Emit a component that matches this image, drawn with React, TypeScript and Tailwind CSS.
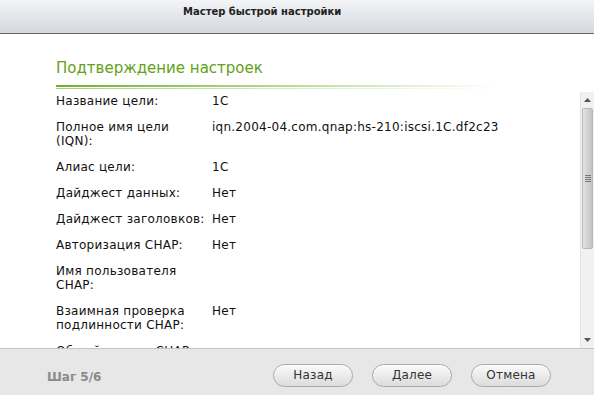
import React from "react";

const rows: { label: string[]; value: string }[] = [
  { label: ["Название цели:"], value: "1C" },
  { label: ["Полное имя цели", "(IQN):"], value: "iqn.2004-04.com.qnap:hs-210:iscsi.1C.df2c23" },
  { label: ["Алиас цели:"], value: "1C" },
  { label: ["Дайджест данных:"], value: "Нет" },
  { label: ["Дайджест заголовков:"], value: "Нет" },
  { label: ["Авторизация CHAP:"], value: "Нет" },
  { label: ["Имя пользователя", "CHAP:"], value: "" },
  { label: ["Взаимная проверка", "подлинности CHAP:"], value: "Нет" },
  { label: ["Общий пароль CHAP:"], value: "" },
];

function Scrollbar() {
  return (
    <div className="w-[14px] shrink-0 flex flex-col bg-[#f1f1f1] border-l border-[#e2e2e2]">
      <div className="h-[16px] flex items-center justify-center">
        <svg width="7" height="4" viewBox="0 0 7 4">
          <path d="M0 4 L3.5 0 L7 4 Z" fill="#555" />
        </svg>
      </div>
      <div className="h-[141px] mx-[1px] rounded-[2px] border border-[#b8b8b8] bg-gradient-to-r from-[#e4e4e4] via-[#d2d2d2] to-[#c4c4c4] flex items-center justify-center">
        <div className="flex flex-col gap-[1px]">
          <div className="w-[6px] h-[1px] bg-[#777]" />
          <div className="w-[6px] h-[1px] bg-[#777]" />
          <div className="w-[6px] h-[1px] bg-[#777]" />
          <div className="w-[6px] h-[1px] bg-[#777]" />
        </div>
      </div>
      <div className="flex-1" />
      <div className="h-[16px] flex items-center justify-center">
        <svg width="7" height="4" viewBox="0 0 7 4">
          <path d="M0 0 L3.5 4 L7 0 Z" fill="#555" />
        </svg>
      </div>
    </div>
  );
}

function Btn({ children }: { children: React.ReactNode }) {
  return (
    <button className="w-[80px] h-[23px] rounded-full border border-[#a9a9a9] bg-gradient-to-b from-[#fafafa] to-[#dcdcdc] text-[12px] tracking-[0.2px] text-[#333] shadow-[inset_0_1px_0_#fff]">
      {children}
    </button>
  );
}

export default function App() {
  return (
    <div
      className="w-[594px] h-[395px] flex flex-col bg-white overflow-hidden"
      style={{ fontFamily: '"DejaVu Sans", Verdana, sans-serif' }}
    >
      <div className="h-[34px] shrink-0 flex items-center pl-[183px] bg-gradient-to-b from-[#f3f4f6] to-[#d4d9df] border-b border-[#666]">
        <span className="text-[10px] font-bold text-[#222] -mt-[11px]">Мастер быстрой настройки</span>
      </div>
      <div className="pl-[56px] pt-[25px] pb-[3px] shrink-0">
        <div className="text-[15px] leading-[19px] text-[#62a118]">Подтверждение настроек</div>
        <div className="mt-[7px] w-[440px] h-[2px] bg-gradient-to-r from-[#6eb02a] via-[#b6d890] to-transparent" />
        <div className="mt-[1px] w-[440px] h-[1px] bg-gradient-to-r from-[#a8d07a] via-[#d6e9c2] to-transparent" />
      </div>
      <div className="h-[256px] shrink-0 flex">
        <div className="flex-1 overflow-hidden pl-[56px] pt-[2px] flex flex-col gap-[12px] text-[12px] tracking-[0.25px] leading-[14px] text-[#111]">
          {rows.map((r, i) => (
            <div key={i} className="flex">
              <div className="w-[156px] shrink-0">
                {r.label.map((l, j) => (
                  <div key={j}>{l}</div>
                ))}
              </div>
              <div>{r.value}</div>
            </div>
          ))}
        </div>
        <Scrollbar />
      </div>
      <div className="flex-1 flex items-center bg-[#e7e7e7] border-t border-[#c4c4c4] pt-[6px] pl-[47px] pr-[43px]">
        <span className="text-[12px] font-bold text-[#8a8a8a] mt-[3px]">Шаг 5/6</span>
        <div className="ml-auto flex gap-[19px]">
          <Btn>Назад</Btn>
          <Btn>Далее</Btn>
          <Btn>Отмена</Btn>
        </div>
      </div>
    </div>
  );
}
